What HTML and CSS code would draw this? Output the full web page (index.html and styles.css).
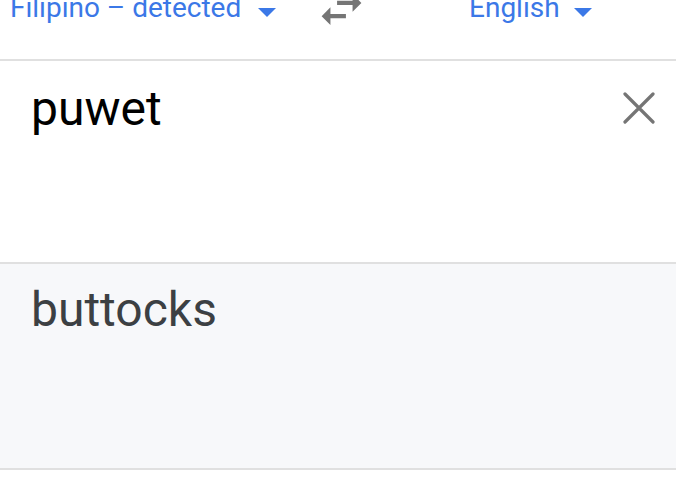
FILE: index.html
```html
<!DOCTYPE html>
<html>
<head>
	<meta charset="utf-8">
	<title>Translate</title>
	<link rel="stylesheet" href="styles.css">
</head>
<body>
	<div class="langbar">
		<div class="lang lang-source">
			<span class="lang-name">Filipino – detected</span>
			<span class="caret"></span>
		</div>
		<div class="swap">
			<svg width="53" height="53" viewBox="0 0 24 24">
				<path d="M6.99 11L3 15l3.99 4v-3H14v-2H6.99v-3zM21 9l-3.99-4v3H10v2h7.01v3L21 9z" fill="#757575"/>
			</svg>
		</div>
		<div class="lang lang-target">
			<span class="lang-name">English</span>
			<span class="caret"></span>
		</div>
	</div>
	<div class="source">
		<div class="source-text">puwet</div>
		<a href="javascript:;" class="clear">
			<svg width="32" height="32" viewBox="0 0 32 32">
				<path d="M2 2L30 30M30 2L2 30" stroke="#757575" stroke-width="3.2" stroke-linecap="round"/>
			</svg>
		</a>
	</div>
	<div class="result">
		<div class="result-text">buttocks</div>
	</div>
</body>
</html>
```

FILE: styles.css
```css
*{margin: 0;padding: 0;box-sizing: border-box;}
body{
	font-family: Roboto, "Noto Sans", sans-serif;
	background: #fff;
	overflow: hidden;
}
.langbar{
	height: 73px;
	margin-top: -12px;
	border-bottom: 2px solid #e0e0e0;
	display: flex;
	align-items: flex-start;
}
.lang{
	display: flex;
	align-items: flex-start;
	color: #3b78e7;
	font-size: 28px;
	line-height: 40px;
}
.lang-source{
	padding-left: 10px;
	width: 315px;
}
.lang-target{
	padding-left: 101px;
}
.lang-target .caret{
	margin-left: 14px;
}
.caret{
	width: 0;
	height: 0;
	border-left: 9px solid transparent;
	border-right: 9px solid transparent;
	border-top: 9px solid #3b78e7;
	margin-left: 17px;
	margin-top: 20px;
}
.swap{
	width: 53px;
	height: 53px;
	margin-top: -5px;
}
.source{
	height: 201px;
	display: flex;
	justify-content: space-between;
	padding: 18px 21px 0 31px;
}
.source-text{
	font-size: 48px;
	color: #000;
	line-height: 60px;
}
.clear{
	width: 32px;
	height: 32px;
	margin-top: 13px;
	display: block;
}
.result{
	height: 208px;
	background: #f7f8fa;
	border-top: 2px solid #e0e0e0;
	border-bottom: 2px solid #e0e0e0;
	padding: 16px 31px 0;
}
.result-text{
	font-size: 48px;
	color: #3c4043;
	line-height: 60px;
}
```
